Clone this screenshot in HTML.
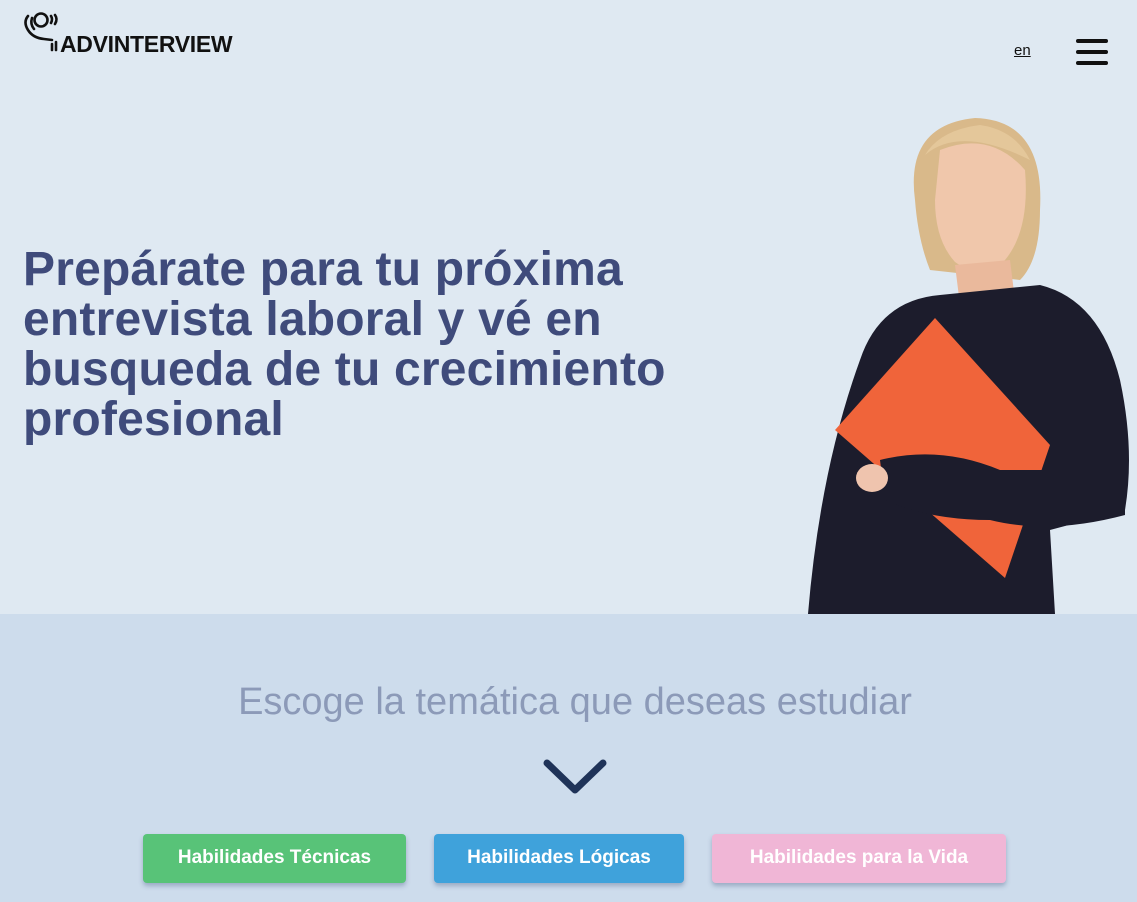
<!DOCTYPE html>
<html><head><meta charset="utf-8"><style>
*{margin:0;padding:0;box-sizing:border-box}
body{width:1137px;height:902px;overflow:hidden;font-family:"Liberation Sans",sans-serif;background:#dfe9f2;position:relative}
.hero{position:absolute;left:0;top:0;width:1137px;height:614px;background:#dfe9f2}
.low{position:absolute;left:0;top:614px;width:1137px;height:288px;background:#cddcec}
.logo{position:absolute;left:22px;top:10px}
.logo span{position:absolute;left:38px;top:21px;font-weight:bold;font-size:23px;color:#111;letter-spacing:-0.3px}
.en{position:absolute;left:1014px;top:42px;font-size:15px;color:#111;text-decoration:underline}
.burger{position:absolute;left:1076px;top:39px;width:32px}
.burger div{height:4px;background:#111;margin-bottom:7px;border-radius:2px}
h1{position:absolute;left:23px;top:245px;font-size:48px;line-height:50px;color:#3f4b7b;font-weight:bold;width:720px;letter-spacing:0.2px}
h2{position:absolute;left:0;width:1150px;top:681px;text-align:center;font-weight:normal;font-size:38px;color:#8c9ab8}
.btn{position:absolute;top:834px;height:49px;border-radius:4px;color:#fff;font-weight:bold;font-size:19px;text-align:center;line-height:48px;box-shadow:0 3px 5px rgba(60,80,120,.35)}
</style></head><body>
<div class="hero"></div><div class="low"></div>
<div class="logo">
<svg width="40" height="42" viewBox="0 0 40 42" fill="none" stroke="#111" stroke-width="2.6" stroke-linecap="round">
<circle cx="19" cy="10" r="6.5"/>
<path d="M6 6 Q1 12 6 20 Q11 28 22 29 L30 30"/>
<path d="M10 8 Q8 14 12 19"/>
<path d="M29 6 Q31 9 29 13"/><path d="M33 5 Q36 9 33 14"/>
<path d="M30 34 L30 40"/><path d="M34 32 L34 40"/>
</svg>
<span>ADVINTERVIEW</span></div>
<div class="en">en</div>
<div class="burger"><div></div><div></div><div></div></div>
<h1>Prepárate para tu próxima entrevista laboral y vé en busqueda de tu crecimiento profesional</h1>
<svg style="position:absolute;left:800px;top:110px" width="337" height="504" viewBox="800 110 337 504">
<path d="M915 200 Q905 125 975 118 Q1045 120 1040 210 Q1040 260 1020 280 L930 270 Q918 240 915 200Z" fill="#d9b98a"/>
<path d="M940 150 Q990 130 1025 170 Q1030 230 1005 260 Q980 280 955 262 Q935 240 935 200Z" fill="#f0c7ab"/>
<path d="M925 155 Q960 125 1030 160 Q1015 130 980 125 Q940 130 925 155Z" fill="#e4c79a"/>
<path d="M955 265 L1010 260 L1015 300 L960 305Z" fill="#eab99c"/>
<path d="M808 614 Q820 470 860 360 Q880 300 940 295 L1040 285 Q1100 300 1120 380 Q1135 450 1125 510 L1050 530 L1055 614Z" fill="#1c1c2c"/>
<path d="M835 430 L935 318 L1050 445 L1005 578 Z" fill="#f0643a"/>
<path d="M880 460 Q940 445 1000 470 Q1060 470 1125 470 L1125 515 Q1050 535 990 520 Q930 520 885 500Z" fill="#1c1c2c"/>
<ellipse cx="872" cy="478" rx="16" ry="14" fill="#efc4ae"/>
</svg>
<h2>Escoge la temática que deseas estudiar</h2>
<svg style="position:absolute;left:543px;top:758px" width="64" height="40"><path d="M4 5 L32 32 L60 5" fill="none" stroke="#1f3358" stroke-width="7" stroke-linecap="round" stroke-linejoin="round"/></svg>
<div class="btn" style="left:143px;width:263px;background:#58c378">Habilidades Técnicas</div>
<div class="btn" style="left:434px;width:250px;background:#3fa2db">Habilidades Lógicas</div>
<div class="btn" style="left:712px;width:294px;background:#f0b6d6">Habilidades para la Vida</div>
</body></html>
